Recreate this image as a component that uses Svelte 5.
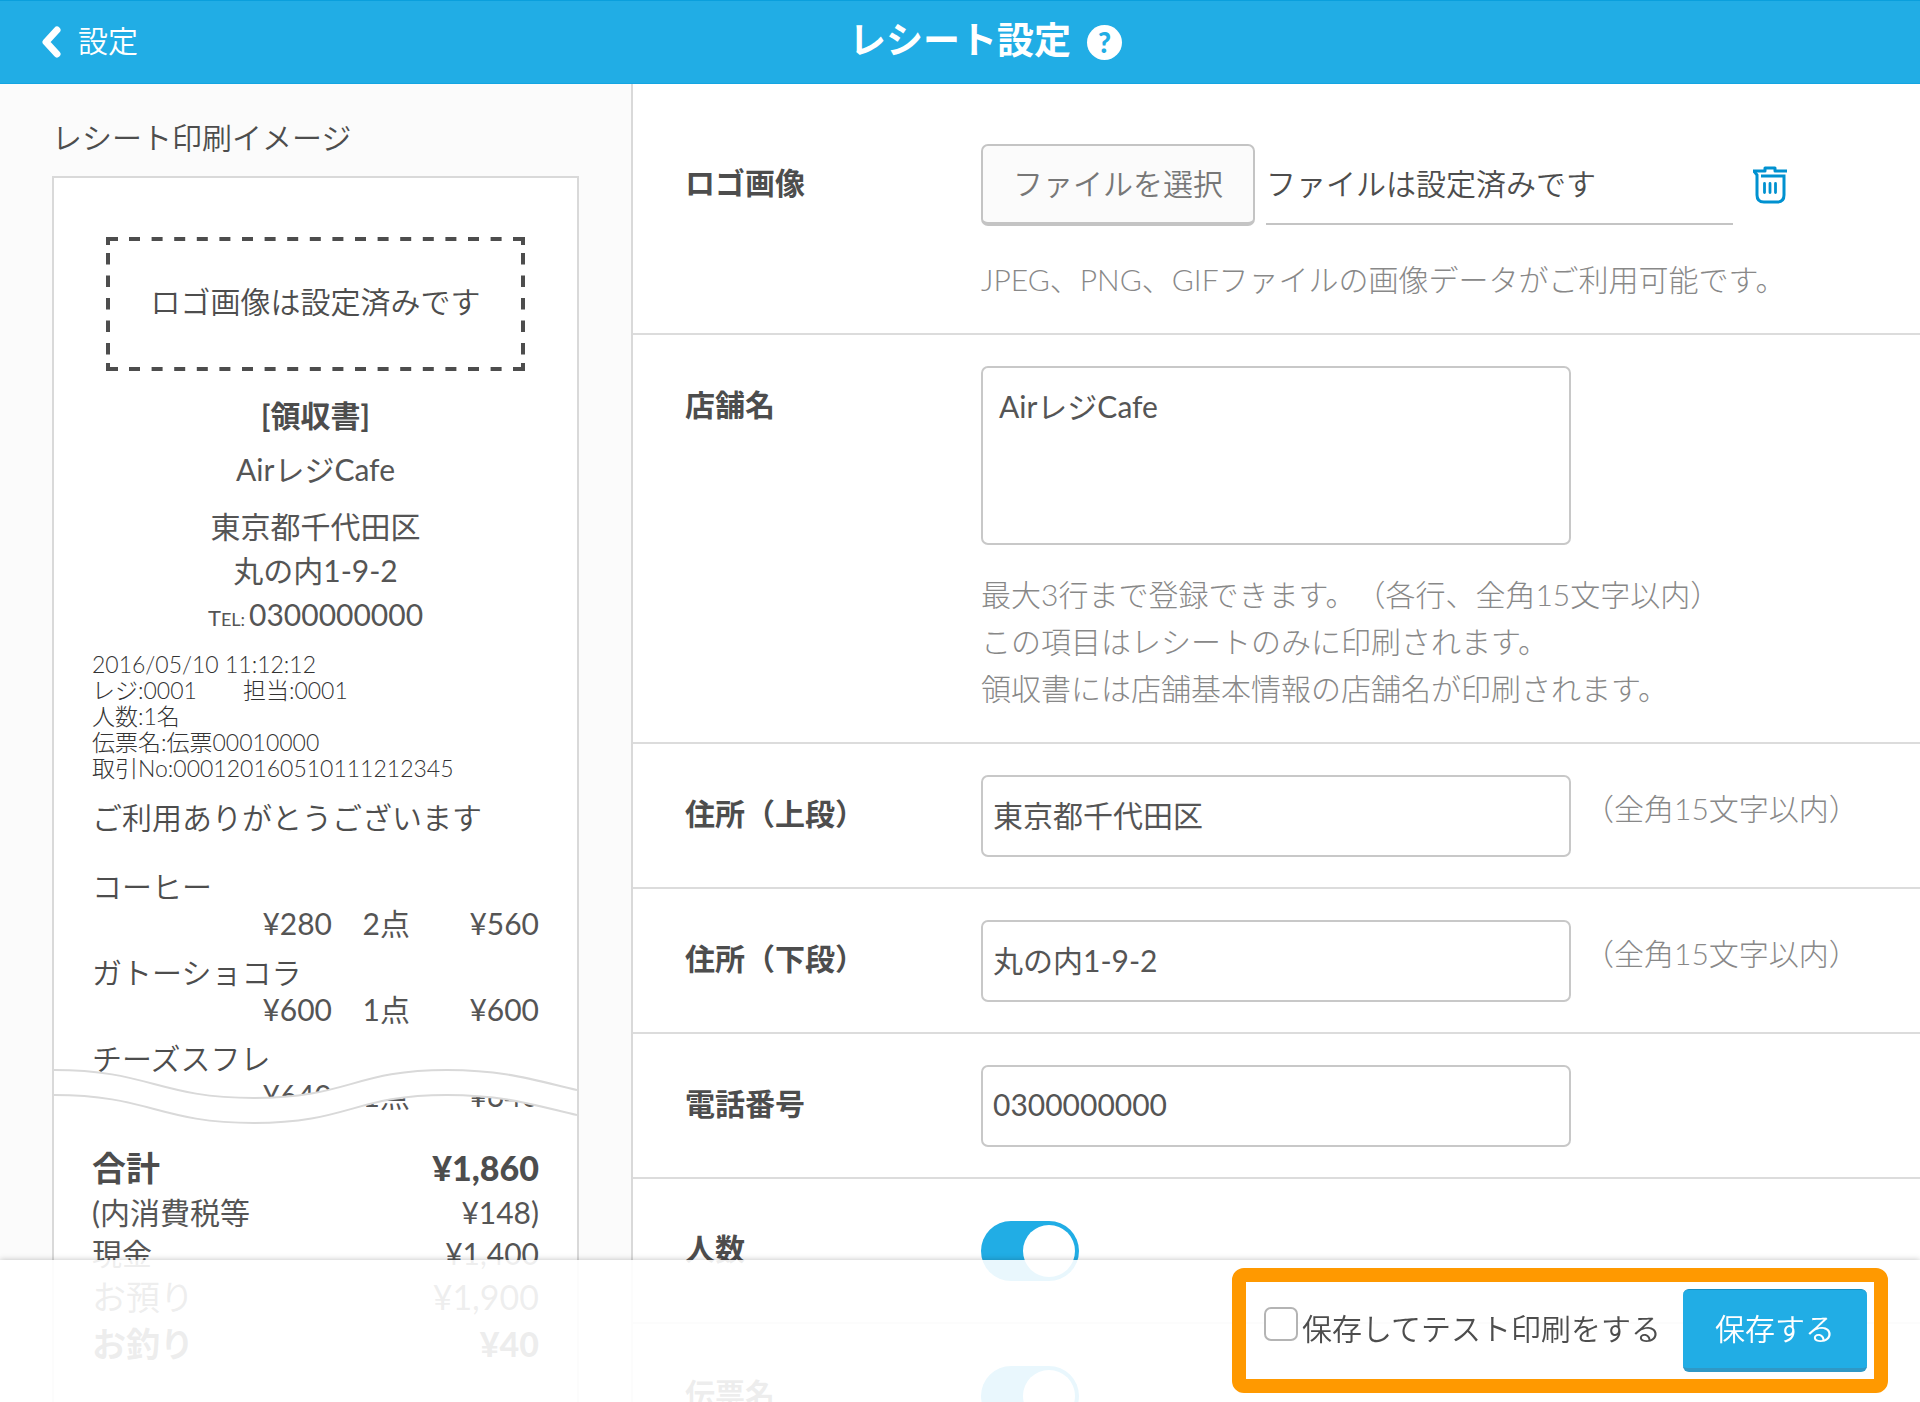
<script lang="ts">
  const receiptInfo: string[] = [
    '2016/05/10 11:12:12',
    'レジ:0001　　担当:0001',
    '人数:1名',
    '伝票名:伝票00010000',
    '取引No:000120160510111212345'
  ];

  const items = [
    { name: 'コーヒー', price: '¥280', qty: '2点', total: '¥560' },
    { name: 'ガトーショコラ', price: '¥600', qty: '1点', total: '¥600' },
    { name: 'チーズスフレ', price: '¥640', qty: '1点', total: '¥640' }
  ];

  const totals = [
    { label: '合計', value: '¥1,860', kind: 'strong' },
    { label: '(内消費税等', value: '¥148)', kind: '' },
    { label: '現金', value: '¥1,400', kind: '' },
    { label: 'お預り', value: '¥1,900', kind: 'large' },
    { label: 'お釣り', value: '¥40', kind: 'strong' }
  ];

  let shopName = $state('AirレジCafe');
  let saveAndPrint = $state(false);

  let fields = $state([
    { id: 'address1', label: '住所（上段）', value: '東京都千代田区', hint: '（全角15文字以内）' },
    { id: 'address2', label: '住所（下段）', value: '丸の内1-9-2', hint: '（全角15文字以内）' },
    { id: 'tel', label: '電話番号', value: '0300000000', hint: '' }
  ]);

  let toggles = $state([
    { id: 'people', label: '人数', on: true },
    { id: 'slip', label: '伝票名', on: true }
  ]);
</script>

<div class="page">
  <header class="header">
    <a class="back" href="#settings">
      <svg width="20" height="32" viewBox="0 0 20 32" aria-hidden="true">
        <path d="M16 4 L5 16 L16 28" fill="none" stroke="#fff" stroke-width="7" stroke-linecap="round" stroke-linejoin="round" />
      </svg>
      <span>設定</span>
    </a>
    <h1>レシート設定</h1>
    <button class="help" type="button" aria-label="ヘルプ">?</button>
  </header>

  <div class="body">
    <aside class="preview">
      <h2>レシート印刷イメージ</h2>
      <div class="receipt">
        <div class="logo">
          <svg viewBox="0 0 419 134" preserveAspectRatio="none" aria-hidden="true">
            <g fill="none" stroke="#4d4d4d" stroke-width="4">
              <path d="M23 2H400M23 132H400" stroke-dasharray="11 11.6" />
              <path d="M2 16V122M417 16V122" stroke-dasharray="11.5 11" />
              <path d="M12 2H2V8M407 2H417V8M12 132H2V126M407 132H417V126" />
            </g>
          </svg>
          <span>ロゴ画像は設定済みです</span>
        </div>

        <div class="shop">
          <p class="doc">[領収書]</p>
          <p class="name">AirレジCafe</p>
          <p>東京都千代田区</p>
          <p>丸の内1-9-2</p>
          <p><span class="tel">T<span>EL:</span></span>0300000000</p>
        </div>

        <div class="info">
          {#each receiptInfo as line}
            <p>{line}</p>
          {/each}
        </div>
        <p class="thanks">ご利用ありがとうございます</p>

        <ul class="items">
          {#each items as item}
            <li>
              <div>{item.name}</div>
              <div class="amounts">
                <span>{item.price}</span>
                <span>{item.qty}</span>
                <span>{item.total}</span>
              </div>
            </li>
          {/each}
        </ul>

        <!-- torn part of the paper -->
        <svg class="wave" viewBox="0 0 523 56" preserveAspectRatio="none" aria-hidden="true">
          <path
            d="M0 1 C95 1 105 29 200 29 C295 29 300 1 393 1 C450 1 480 11 523 21 V46 C480 36 450 26 393 26 C300 26 295 54 200 54 C105 54 95 26 0 26 Z"
            fill="#fff"
          />
          <path
            d="M0 1 C95 1 105 29 200 29 C295 29 300 1 393 1 C450 1 480 11 523 21 M523 46 C480 36 450 26 393 26 C300 26 295 54 200 54 C105 54 95 26 0 26"
            fill="none"
            stroke="#d9d9d9"
            stroke-width="2"
          />
        </svg>

        <dl class="totals">
          {#each totals as row}
            <div class={row.kind}>
              <dt>{row.label}</dt>
              <dd>{row.value}</dd>
            </div>
          {/each}
        </dl>
        <p class="closing">上記正に領収いたしました</p>
      </div>
    </aside>

    <main class="form">
      <section class="row first">
        <label class="label" for="logo-file">ロゴ画像</label>
        <div class="field">
          <div class="file">
            <button class="choose" type="button">ファイルを選択</button>
            <input id="logo-file" class="filename" type="text" readonly value="ファイルは設定済みです" />
            <button class="trash" type="button" aria-label="削除">
              <svg width="34" height="38" viewBox="0 0 34 38" fill="none" stroke="#0091d0" aria-hidden="true">
                <path d="M0 5 H12 V2 H22 V5 H34" stroke-width="3" stroke-linejoin="round" />
                <path d="M1 5 L4 9 V29 Q4 36 11 36 H24 Q31 36 31 29 V10 H8" stroke-width="3" />
                <path d="M11.5 17.5 V26.5 M17 17.5 V26.5 M22.5 17.5 V26.5" stroke-width="2.8" stroke-linecap="round" />
              </svg>
            </button>
          </div>
          <p class="note">JPEG、PNG、GIFファイルの画像データがご利用可能です。</p>
        </div>
      </section>

      <section class="row">
        <label class="label" for="shop-name">店舗名</label>
        <div class="field">
          <textarea id="shop-name" bind:value={shopName}></textarea>
          <p class="note">
            最大3行まで登録できます。（各行、全角15文字以内）<br />
            この項目はレシートのみに印刷されます。<br />
            領収書には店舗基本情報の店舗名が印刷されます。
          </p>
        </div>
      </section>

      {#each fields as field}
        <section class="row">
          <label class="label" for={field.id}>{field.label}</label>
          <div class="field inline">
            <input id={field.id} class="text" type="text" bind:value={field.value} />
            {#if field.hint}
              <span class="hint">{field.hint}</span>
            {/if}
          </div>
        </section>
      {/each}

      {#each toggles as toggle}
        <section class="row">
          <label class="label" for={toggle.id}>{toggle.label}</label>
          <div class="field inline">
            <input id={toggle.id} class="switch" type="checkbox" bind:checked={toggle.on} />
          </div>
        </section>
      {/each}
    </main>
  </div>

  <footer class="footer">
    <div class="actions">
      <input id="test-print" type="checkbox" bind:checked={saveAndPrint} />
      <label for="test-print">保存してテスト印刷をする</label>
      <button class="save" type="button">保存する</button>
    </div>
  </footer>
</div>

<style>
  :global(body) {
    overflow: hidden;
  }

  .page {
    position: relative;
    display: flex;
    flex-direction: column;
    height: 100vh;
    font-family: Lato, 'Noto Sans CJK JP', sans-serif;
    font-size: 30px;
    font-weight: 350;
    line-height: 44px;
    text-spacing-trim: space-all;
    color: #4d4d4d;
    background: #fff;
  }

  .page :global(*) {
    box-sizing: border-box;
  }

  h1,
  h2,
  p,
  ul,
  dl,
  dd {
    margin: 0;
    padding: 0;
  }

  button,
  input,
  textarea {
    margin: 0;
    font: inherit;
    color: inherit;
  }

  .header {
    display: grid;
    grid-template-columns: 1fr auto 1fr;
    align-items: center;
    flex: none;
    height: 84px;
    color: #fff;
    background: #21ade5;
    border-top: 1px solid #0a9fdc;
    border-bottom: 1px solid #14a5e2;
  }

  .back {
    display: flex;
    align-items: center;
    gap: 17px;
    padding-left: 41px;
    color: #fff;
    text-decoration: none;
  }

  .back span,
  h1 {
    padding-bottom: 4px;
  }

  h1 {
    font-size: 37px;
    font-weight: 600;
  }

  .help {
    width: 35px;
    height: 35px;
    margin-left: 16px;
    padding: 0;
    border: 0;
    border-radius: 50%;
    background: #fff;
    color: #21ade5;
    font-size: 28px;
    font-weight: 900;
    line-height: 35px;
  }

  .body {
    display: flex;
    flex: 1;
    min-height: 0;
  }

  .preview {
    flex: 0 0 633px;
    padding: 30px 52px 0;
    overflow-y: auto;
    scrollbar-width: none;
    background: #fbfbfb;
    border-right: 2px solid #d9d9d9;
  }

  h2 {
    margin-bottom: 15px;
    font-size: 30px;
    font-weight: 350;
    line-height: 47px;
  }

  .receipt {
    position: relative;
    padding: 59px 38px 160px;
    background: #fff;
    border: 2px solid #d9d9d9;
  }

  .logo {
    position: relative;
    display: flex;
    align-items: center;
    justify-content: center;
    height: 134px;
    margin: 0 14px;
    padding-bottom: 6px;
  }

  .logo svg {
    position: absolute;
    inset: 0;
    width: 100%;
    height: 100%;
  }

  .shop {
    margin-top: 22px;
    font-weight: 400;
    color: #555;
    text-align: center;
  }

  .doc {
    font-weight: 700;
    color: #4d4d4d;
  }

  .name {
    margin: 10px 0 13px;
  }

  .tel {
    margin-right: 4px;
    font-size: 22px;
  }

  .tel span {
    font-size: 18px;
  }

  .info {
    margin-top: 10px;
    font-size: 23px;
    font-weight: 300;
    line-height: 26px;
    color: #333;
  }

  .thanks {
    margin-top: 14px;
  }

  .items {
    display: grid;
    gap: 12px;
    margin-top: 29px;
    list-style: none;
    line-height: 37px;
  }

  .amounts {
    display: grid;
    grid-template-columns: 240px 78px 1fr;
    font-weight: 400;
    color: #555;
    text-align: right;
  }

  .wave {
    position: absolute;
    top: 891px;
    left: 0;
    width: 100%;
    height: 56px;
  }

  .totals {
    margin-top: 30px;
    font-weight: 400;
    line-height: 41px;
    color: #555;
  }

  .totals div {
    display: flex;
    justify-content: space-between;
  }

  .totals .strong {
    font-size: 34px;
    font-weight: 700;
    line-height: 48px;
    color: #4d4d4d;
  }

  .totals .strong dd {
    font-weight: 900;
  }

  .totals .large {
    font-size: 34px;
    line-height: 46px;
  }

  .closing {
    margin-top: 32px;
    font-size: 22px;
    line-height: 26px;
    text-align: center;
  }

  .form {
    flex: 1;
    min-width: 0;
    overflow-y: auto;
    scrollbar-width: none;
  }

  .row {
    display: flex;
    padding: 31px 52px 30px;
    border-bottom: 2px solid #dcdcdc;
  }

  .row.first {
    padding-top: 60px;
  }

  .label {
    flex: 0 0 296px;
    font-weight: 700;
    line-height: 76px;
  }

  .field {
    flex: 1;
    min-width: 0;
  }

  .inline {
    display: flex;
    align-items: center;
    height: 82px;
  }

  .file {
    display: flex;
    align-items: center;
    margin-bottom: 30px;
  }

  .choose {
    width: 274px;
    height: 82px;
    padding: 0 0 2px;
    color: #777;
    background: #fbfbfb;
    border: 2px solid #c4c4c4;
    border-bottom-width: 4px;
    border-radius: 7px;
  }

  .filename {
    width: 467px;
    height: 80px;
    margin-left: 11px;
    padding: 0 0 4px;
    background: none;
    border: 0;
    border-bottom: 2px solid #c4c4c4;
  }

  .trash {
    height: 38px;
    margin-left: 20px;
    padding: 0;
    border: 0;
    background: none;
    line-height: 0;
  }

  .note,
  .hint {
    font-weight: 300;
    line-height: 47px;
    color: #888;
  }

  textarea {
    display: block;
    width: 590px;
    height: 179px;
    margin-bottom: 26px;
    padding: 15px 16px;
    font-weight: 400;
    line-height: 47px;
    color: #555;
    background: #fff;
    border: 2px solid #c8c8c8;
    border-radius: 7px;
    resize: none;
  }

  .text {
    width: 590px;
    height: 82px;
    padding: 0 10px 4px;
    font-weight: 400;
    color: #555;
    background: #fff;
    border: 2px solid #c8c8c8;
    border-radius: 7px;
  }

  .hint {
    align-self: flex-start;
    margin-left: 13px;
    padding-top: 10px;
    white-space: nowrap;
  }

  .switch {
    display: flex;
    width: 98px;
    height: 60px;
    padding: 4px;
    appearance: none;
    background: #d9d9d9;
    border-radius: 30px;
  }

  .switch::before {
    content: '';
    width: 52px;
    height: 52px;
    border-radius: 50%;
    background: #fff;
  }

  .switch:checked {
    justify-content: flex-end;
    background: #21ade5;
  }

  .footer {
    position: absolute;
    right: 0;
    bottom: 0;
    left: 0;
    display: flex;
    justify-content: flex-end;
    padding: 8px 32px 9px;
    background: rgba(255, 255, 255, 0.9);
    box-shadow: 0 0 6px rgba(0, 0, 0, 0.25);
  }

  .actions {
    display: flex;
    align-items: center;
    padding: 7px 7px 7px 18px;
    border: 14px solid #ff9900;
    border-radius: 12px;
  }

  .actions input {
    width: 34px;
    height: 34px;
    margin: 0 4px 14px 0;
    appearance: none;
    background: #fff;
    border: 2px solid #b4b4b4;
    border-radius: 7px;
  }

  .actions label {
    padding-bottom: 5px;
  }

  .actions input:checked {
    background: #21ade5;
  }

  .save {
    width: 184px;
    height: 83px;
    margin-left: 22px;
    padding: 0 0 2px;
    color: #fff;
    background: #21ade5;
    border: 0 solid #2f98c6;
    border-top: 1px solid #1590c4;
    border-bottom-width: 4px;
    border-radius: 6px;
  }
</style>
